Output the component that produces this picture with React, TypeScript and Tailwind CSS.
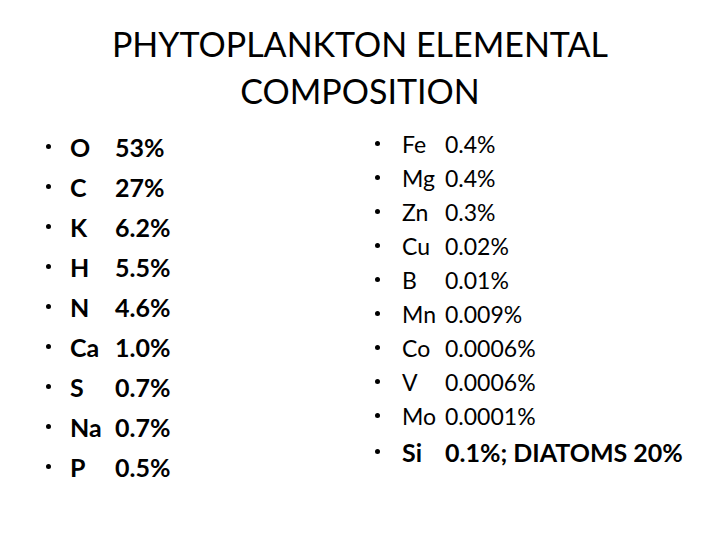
import React from 'react';

const left = [
  ['O', '53%'],
  ['C', '27%'],
  ['K', '6.2%'],
  ['H', '5.5%'],
  ['N', '4.6%'],
  ['Ca', '1.0%'],
  ['S', '0.7%'],
  ['Na', '0.7%'],
  ['P', '0.5%'],
];

const right = [
  ['Fe', '0.4%'],
  ['Mg', '0.4%'],
  ['Zn', '0.3%'],
  ['Cu', '0.02%'],
  ['B', '0.01%'],
  ['Mn', '0.009%'],
  ['Co', '0.0006%'],
  ['V', '0.0006%'],
  ['Mo', '0.0001%'],
];

const Dot = () => <span className="w-[5px] h-[5px] rounded-full bg-black shrink-0 -translate-y-[1px]" />;

export default function App() {
  return (
    <div className="w-[720px] h-[540px] bg-white text-black overflow-hidden font-['Lato','Liberation_Sans',sans-serif]">
      <h1 className="pt-[20px] text-center text-[34px] leading-[47px] font-normal">
        PHYTOPLANKTON ELEMENTAL
        <br />
        COMPOSITION
      </h1>

      <div className="flex mt-[13px]">
        <ul className="w-[375px] pl-[46px] font-bold text-[25px] leading-[40px]">
          {left.map(([el, pct]) => (
            <li key={el} className="flex items-center">
              <Dot />
              <span className="ml-[19px] w-[45px]">{el}</span>
              <span>{pct}</span>
            </li>
          ))}
        </ul>

        <ul className="flex-1 text-[23px] leading-[34px]">
          {right.map(([el, pct]) => (
            <li key={el} className="flex items-center">
              <Dot />
              <span className="ml-[22px] w-[43px]">{el}</span>
              <span>{pct}</span>
            </li>
          ))}
          <li className="flex items-center font-bold text-[25px] leading-[38px]">
            <Dot />
            <span className="ml-[22px] w-[43px]">Si</span>
            <span>0.1%; DIATOMS 20%</span>
          </li>
        </ul>
      </div>
    </div>
  );
}
